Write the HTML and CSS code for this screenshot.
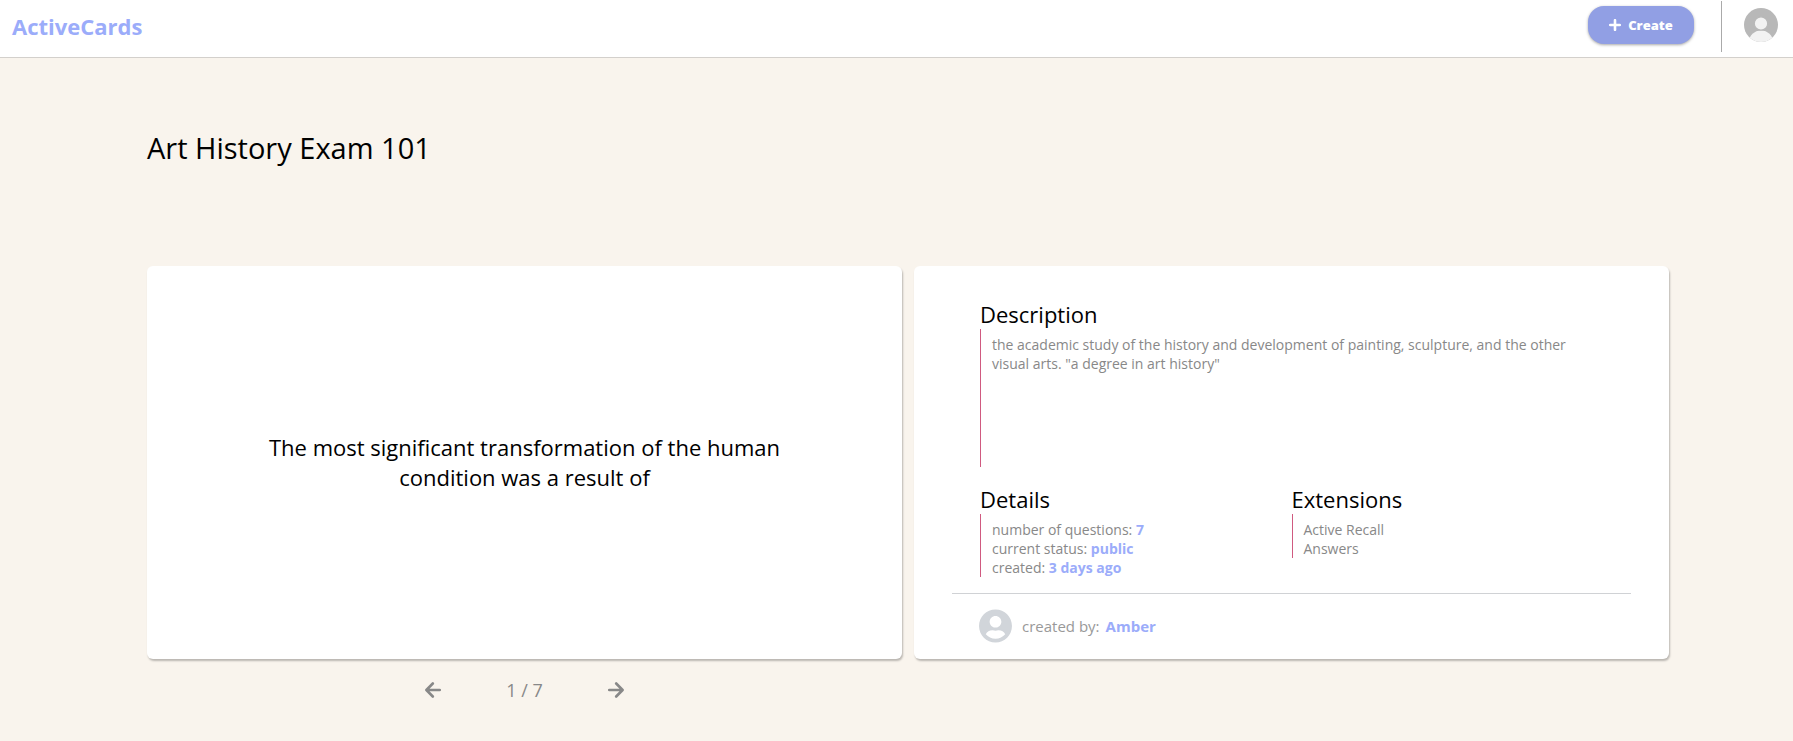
FILE: index.html
```html
<!DOCTYPE html>
<html lang="en">
<head>
<meta charset="utf-8">
<title>ActiveCards</title>
<link rel="stylesheet" href="styles.css">
</head>
<body>
<header class="topbar">
  <a class="brand" href="#">ActiveCards</a>
  <div class="topbar-actions">
    <button class="create" type="button">
      <svg class="create-icon" viewBox="0 0 12 12" aria-hidden="true"><path d="M6 1.200v9.600M1.200 6h9.600"/></svg>
      Create
    </button>
    <button class="account" type="button" aria-label="Account">
      <svg viewBox="0 0 34 34" aria-hidden="true">
        <clipPath id="disc"><circle cx="17" cy="17" r="17"/></clipPath>
        <g clip-path="url(#disc)">
          <rect width="34" height="34" fill="#b8b8b8"/>
          <ellipse cx="17" cy="34" rx="12" ry="11.500" fill="#f2f2f2"/>
          <circle cx="17" cy="15.500" r="6.700" fill="#f2f2f2" stroke="#b8b8b8" stroke-width="1.200"/>
        </g>
      </svg>
    </button>
  </div>
</header>
<main class="page">
  <h1 class="title">Art History Exam 101</h1>
  <div class="columns">
    <section class="card question">
      <p class="question-text">The most significant transformation of the human condition was a result of</p>
    </section>
    <section class="card info">
      <div class="info-body">
        <div class="block">
          <h2 class="heading">Description</h2>
          <p class="note description">the academic study of the history and development of painting, sculpture, and the other visual arts. "a degree in art history"</p>
        </div>
        <div class="facts">
          <div class="block">
            <h2 class="heading">Details</h2>
            <ul class="note">
              <li>number of questions: <b>7</b></li>
              <li>current status: <b>public</b></li>
              <li>created: <b>3 days ago</b></li>
            </ul>
          </div>
          <div class="block">
            <h2 class="heading">Extensions</h2>
            <ul class="note">
              <li>Active Recall</li>
              <li>Answers</li>
            </ul>
          </div>
        </div>
      </div>
      <footer class="author">
        <svg class="author-icon" viewBox="0 0 496 512" aria-hidden="true"><path fill="#d1d5da" d="M248 8C111 8 0 119 0 256s111 248 248 248 248-111 248-248S385 8 248 8zm0 96c48.600 0 88 39.400 88 88s-39.400 88-88 88-88-39.400-88-88 39.400-88 88-88zm0 344c-58.700 0-111.300-26.600-146.500-68.200 18.800-35.400 55.600-59.800 98.500-59.800 2.400 0 4.800.4 7.100 1.100 13 4.200 26.600 6.900 40.900 6.900 14.300 0 28-2.700 40.900-6.900 2.300-.7 4.700-1.100 7.100-1.100 42.900 0 79.700 24.400 98.500 59.800C359.300 421.400 306.700 448 248 448z"/></svg>
        <span>created by:</span>
        <a class="author-name" href="#">Amber</a>
      </footer>
    </section>
    <nav class="pager" aria-label="Questions">
      <button class="arrow" type="button" aria-label="Previous"><svg viewBox="0 0 16 16" aria-hidden="true"><path d="M14.800 8H1.800M7.800 1.500L1.400 8L7.800 14.500"/></svg></button>
      <span class="count">1 / 7</span>
      <button class="arrow" type="button" aria-label="Next"><svg viewBox="0 0 16 16" aria-hidden="true"><path d="M1.200 8H14.200M8.200 1.500L14.600 8L8.200 14.500"/></svg></button>
    </nav>
  </div>
</main>
</body>
</html>
```
FILE: styles.css
```css
* { box-sizing: border-box; margin: 0; padding: 0; }
body {
  background: #f9f4ed;
  color: #000;
  font-family: "Open Sans", sans-serif;
  font-size: 14px;
}
button { border: 0; background: none; font: inherit; cursor: pointer; }
a { text-decoration: none; }
ul { list-style: none; }

.topbar {
  display: flex;
  justify-content: space-between;
  align-items: flex-start;
  height: 58px;
  padding: 0 15px 0 12px;
  background: #fff;
  border-bottom: 1px solid #d3d0cc;
}
.brand {
  padding-top: 11px;
  color: #9bacfa;
  font-size: 22px;
  font-weight: 700;
  line-height: 30px;
}
.topbar-actions { display: flex; padding-top: 1px; }
.create {
  display: flex;
  align-items: center;
  justify-content: center;
  gap: 7px;
  width: 106px;
  height: 38px;
  margin-top: 5px;
  border-radius: 16px;
  background: #919fe4;
  box-shadow: 0 1px 3px rgba(0, 0, 0, .35);
  color: #fff;
  font-size: 13px;
  font-weight: 800;
}
.create-icon { width: 12px; height: 12px; fill: none; stroke: #fff; stroke-width: 2.600; stroke-linecap: round; }
.account {
  height: 51px;
  margin-left: 27px;
  padding: 7px 0 10px 22px;
  border-left: 1px solid #aaa;
}
.account svg { display: block; width: 34px; height: 34px; }

.page { padding: 70px 124px 32px 147px; }
.title { font-size: 29px; font-weight: 400; line-height: 40px; }
.columns {
  display: grid;
  grid-template-columns: 1fr 1fr;
  gap: 0 12px;
  margin-top: 98px;
}
.card {
  min-height: 393px;
  border-radius: 6px;
  background: #fff;
  box-shadow: 1px 2px 2px rgba(0, 0, 0, .25);
}
.question { display: flex; align-items: center; justify-content: center; padding: 0 112px 2px; }
.question-text { font-size: 22px; line-height: 30px; text-align: center; }

.info { display: flex; flex-direction: column; padding: 33px 38px 0; }
.info-body { padding: 0 28px; }
.heading { font-size: 22px; font-weight: 400; line-height: 30px; }
.note {
  padding: 6px 12px 0 11px;
  border-left: 1px solid #d05a80;
  color: #888;
  line-height: 19px;
}
.description { min-height: 138px; }
.facts { display: grid; grid-template-columns: 1fr 1fr; align-items: start; margin-top: 17px; }
.note b, .author-name { color: #9bacfa; font-weight: 700; }
.author {
  display: flex;
  align-items: center;
  flex: 1;
  margin-top: 16px;
  padding: 0 27px 1px;
  border-top: 1px solid #d0d2d5;
  color: #999;
  font-size: 15px;
}
.author-icon { width: 33px; height: 34px; margin-right: 10px; }
.author-name { margin-left: 6px; }

.pager { display: flex; align-items: center; justify-content: center; gap: 65px; padding-top: 19px; color: #888; font-size: 18px; line-height: 24px; }
.arrow svg { display: block; width: 16px; height: 16px; fill: none; stroke: #888; stroke-width: 2.600; stroke-linecap: round; stroke-linejoin: round; }
```
